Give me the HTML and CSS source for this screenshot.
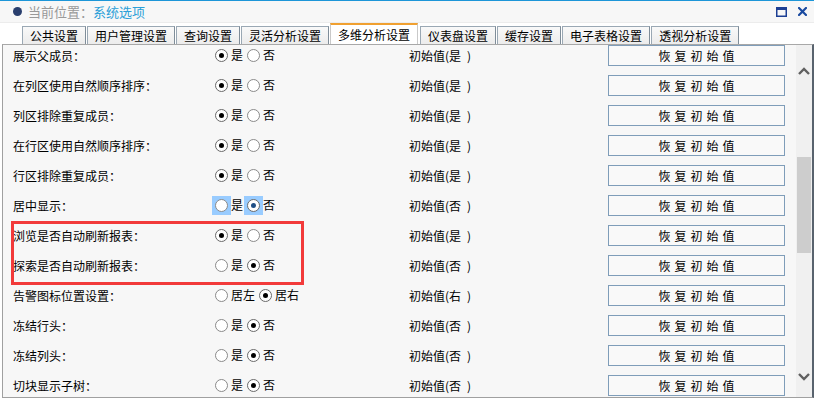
FILE: index.html
```html
<!DOCTYPE html>
<html lang="zh-CN">
<head>
<meta charset="utf-8">
<link rel="stylesheet" href="styles.css">
</head>
<body>
<div class="topline"></div>
<div class="header">
  <span class="bullet"></span>
  <span class="loc-label">当前位置：</span>
  <span class="loc-value">系统选项</span>
  <span class="win-icons">
    <svg class="ico" width="11" height="10" viewBox="0 0 11 10"><rect x="0.75" y="0.75" width="9.5" height="8.5" fill="none" stroke="#1c3f94" stroke-width="1.5"/><rect x="0" y="0" width="11" height="3" fill="#1c3f94"/></svg>
    <svg class="ico" width="9" height="9" viewBox="0 0 9 9"><path d="M1 1 L8 8 M8 1 L1 8" stroke="#1a4aa0" stroke-width="2.2" stroke-linecap="square"/></svg>
  </span>
</div>
<div class="tabs">
  <div class="tab">公共设置</div>
  <div class="tab">用户管理设置</div>
  <div class="tab">查询设置</div>
  <div class="tab">灵活分析设置</div>
  <div class="tab active">多维分析设置</div>
  <div class="tab">仪表盘设置</div>
  <div class="tab">缓存设置</div>
  <div class="tab">电子表格设置</div>
  <div class="tab">透视分析设置</div>
</div>
<div class="panel">
  <div class="rows">
    <div class="row"><div class="lbl">展示父成员：</div><div class="opts"><span class="radio on"></span><span class="ot">是</span><span class="radio"></span><span class="ot">否</span></div><div class="init">初始值(是&ensp;)</div><div class="btn">恢复初始值</div></div>
    <div class="row"><div class="lbl">在列区使用自然顺序排序：</div><div class="opts"><span class="radio on"></span><span class="ot">是</span><span class="radio"></span><span class="ot">否</span></div><div class="init">初始值(是&ensp;)</div><div class="btn">恢复初始值</div></div>
    <div class="row"><div class="lbl">列区排除重复成员：</div><div class="opts"><span class="radio on"></span><span class="ot">是</span><span class="radio"></span><span class="ot">否</span></div><div class="init">初始值(是&ensp;)</div><div class="btn">恢复初始值</div></div>
    <div class="row"><div class="lbl">在行区使用自然顺序排序：</div><div class="opts"><span class="radio on"></span><span class="ot">是</span><span class="radio"></span><span class="ot">否</span></div><div class="init">初始值(是&ensp;)</div><div class="btn">恢复初始值</div></div>
    <div class="row"><div class="lbl">行区排除重复成员：</div><div class="opts"><span class="radio on"></span><span class="ot">是</span><span class="radio"></span><span class="ot">否</span></div><div class="init">初始值(是&ensp;)</div><div class="btn">恢复初始值</div></div>
    <div class="row"><div class="lbl">居中显示：</div><div class="opts"><span class="hl"><span class="radio"></span></span><span class="ot">是</span><span class="hl"><span class="radio on blue"></span></span><span class="ot">否</span></div><div class="init">初始值(否&ensp;)</div><div class="btn">恢复初始值</div></div>
    <div class="marked">
      <div class="row"><div class="lbl">浏览是否自动刷新报表：</div><div class="opts"><span class="radio on"></span><span class="ot">是</span><span class="radio"></span><span class="ot">否</span></div><div class="init">初始值(是&ensp;)</div><div class="btn">恢复初始值</div></div>
      <div class="row"><div class="lbl">探索是否自动刷新报表：</div><div class="opts"><span class="radio"></span><span class="ot">是</span><span class="radio on"></span><span class="ot">否</span></div><div class="init">初始值(否&ensp;)</div><div class="btn">恢复初始值</div></div>
    </div>
    <div class="row"><div class="lbl">告警图标位置设置：</div><div class="opts"><span class="radio"></span><span class="ot">居左</span><span class="radio on"></span><span class="ot">居右</span></div><div class="init">初始值(右&ensp;)</div><div class="btn">恢复初始值</div></div>
    <div class="row"><div class="lbl">冻结行头：</div><div class="opts"><span class="radio"></span><span class="ot">是</span><span class="radio on"></span><span class="ot">否</span></div><div class="init">初始值(否&ensp;)</div><div class="btn">恢复初始值</div></div>
    <div class="row"><div class="lbl">冻结列头：</div><div class="opts"><span class="radio"></span><span class="ot">是</span><span class="radio on"></span><span class="ot">否</span></div><div class="init">初始值(否&ensp;)</div><div class="btn">恢复初始值</div></div>
    <div class="row"><div class="lbl">切块显示子树：</div><div class="opts"><span class="radio"></span><span class="ot">是</span><span class="radio on"></span><span class="ot">否</span></div><div class="init">初始值(否&ensp;)</div><div class="btn">恢复初始值</div></div>
  </div>
  <div class="scrollbar">
    <div class="sb-btn sb-up"><svg width="12" height="8" viewBox="0 0 12 8"><polyline points="1,7 6,2 11,7" fill="none" stroke="#606060" stroke-width="2.4"/></svg></div>
    <div class="sb-gap1"></div>
    <div class="thumb"></div>
    <div class="sb-gap2"></div>
    <div class="sb-btn"><svg width="12" height="8" viewBox="0 0 12 8"><polyline points="1,1 6,6 11,1" fill="none" stroke="#606060" stroke-width="2.4"/></svg></div>
  </div>
</div>
</body>
</html>
```
FILE: styles.css
```css
* { box-sizing: border-box; }
html, body { margin: 0; padding: 0; }
body {
  width: 814px;
  height: 400px;
  overflow: hidden;
  background: #ffffff;
  font-family: "Noto Sans CJK SC", "Liberation Sans", sans-serif;
  font-size: 12px;
  color: #000;
}
.topline { height: 1px; background: #1d96d8; }
.header {
  height: 22px;
  background: #f7f7f7;
  display: flex;
  align-items: center;
  padding-left: 13px;
  border-bottom: 1px solid #ececec;
}
.bullet {
  width: 9px; height: 9px; border-radius: 50%;
  background: #2a3f6e;
  margin-right: 6px;
}
.loc-label { color: #999999; font-size: 13px; width: 65px; }
.loc-value { color: #2b9fd8; font-size: 13px; }
.win-icons {
  margin-left: auto;
  display: flex;
  align-items: center;
  gap: 11px;
  padding-right: 7px;
}
.ico { display: block; }
.tabs {
  height: 21px;
  display: flex;
  align-items: flex-end;
  padding-left: 22px;
  background: #ffffff;
}
.tab {
  height: 18px;
  padding: 0 7px;
  border: 1px solid #9aa8b4;
  border-bottom: none;
  border-right-color: #7f8d99;
  background: linear-gradient(#f9f9f9, #ececec);
  line-height: 17px;
  margin-right: 1px;
  white-space: nowrap;
}
.tab.active {
  height: 21px;
  background: #ffffff;
  border-color: #c9c9c9;
  border-top: 2px solid #f0a030;
  line-height: 19px;
  margin-right: 2px;
}
.panel {
  margin-left: 2px;
  height: 354px;
  border-top: 1px solid #a8a8a8;
  border-left: 1px solid #a0a0a0;
  border-bottom: 1px solid #a0a0a0;
  border-right: 2px solid #59636e;
  background: #f7f7f7;
  display: flex;
  overflow: hidden;
}
.rows { flex: 1; margin-top: -5px; }
.row {
  height: 30px;
  display: flex;
  align-items: center;
  padding-left: 10px;
}
.lbl { width: 202px; white-space: nowrap; }
.opts { width: 194px; display: flex; align-items: center; }
.radio {
  width: 13px; height: 13px;
  border: 1px solid #8a8a8a;
  border-radius: 50%;
  background: #ffffff;
  display: flex; align-items: center; justify-content: center;
}
.radio.on { border-color: #6a6a6a; }
.radio.on::after {
  content: "";
  width: 5px; height: 5px; border-radius: 50%;
  background: #000;
}
.radio.on.blue::after { background: #1f4e85; }
.hl {
  background: #99ccff;
  padding: 3px;
  margin: -3px;
  display: flex;
}
.ot { margin-left: 3px; margin-right: 4px; line-height: 16px; }
.hl + .ot { margin-left: 3px; }
.init { width: 199px; white-space: nowrap; }
.btn {
  width: 177px;
  height: 21px;
  border: 1px solid #7f9db9;
  background: #f9f9f9;
  text-align: center;
  line-height: 19px;
  letter-spacing: 4px;
  padding-left: 4px;
}
.marked { position: relative; }
.marked::after {
  content: "";
  position: absolute;
  left: 8px; top: 1px;
  width: 287px; height: 58px;
  border: 3px solid #f23a3a;
  pointer-events: none;
}
.scrollbar {
  width: 16px;
  background: #f0f0f0;
  display: flex;
  flex-direction: column;
  flex-shrink: 0;
}
.sb-btn { height: 17px; display: flex; align-items: center; justify-content: center; }
.sb-up { margin-top: 17px; }
.sb-gap1 { height: 78px; }
.thumb { height: 96px; margin-left: 1px; width: 14px; background: #cdcdcd; }
.sb-gap2 { height: 115px; }
```
